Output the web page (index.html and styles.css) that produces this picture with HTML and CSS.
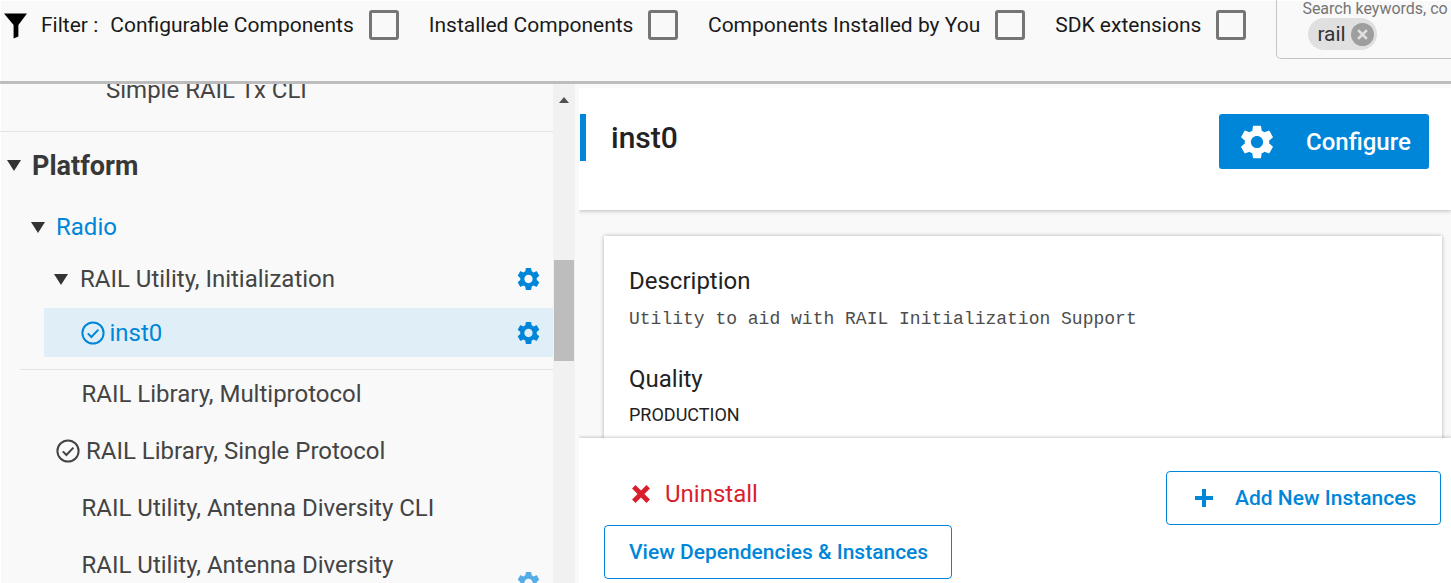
FILE: index.html
```html
<!DOCTYPE html>
<html lang="en">
<head>
  <meta charset="UTF-8" />
  <title>Software Components</title>
  <link rel="stylesheet" href="styles.css">
</head>
<body>
  <svg class="defs" width="0" height="0">
    <symbol id="gear" viewBox="2 2 20 20">
      <path d="M19.14 12.94c.04-.3.06-.61.06-.94 0-.32-.02-.64-.07-.94l2.03-1.58a.49.49 0 0 0 .12-.61l-1.92-3.32a.488.488 0 0 0-.59-.22l-2.39.96c-.5-.38-1.03-.7-1.62-.94l-.36-2.54a.484.484 0 0 0-.48-.41h-3.84c-.24 0-.43.17-.47.41l-.36 2.54c-.59.24-1.13.57-1.62.94l-2.39-.96c-.22-.08-.47 0-.59.22L2.74 8.87c-.12.21-.08.47.12.61l2.03 1.58c-.05.3-.09.63-.09.94s.02.64.07.94l-2.03 1.58a.49.49 0 0 0-.12.61l1.92 3.32c.12.22.37.29.59.22l2.39-.96c.5.38 1.03.7 1.62.94l.36 2.54c.05.24.24.41.48.41h3.84c.24 0 .44-.17.47-.41l.36-2.54c.59-.24 1.13-.56 1.62-.94l2.39.96c.22.08.47 0 .59-.22l1.92-3.32c.12-.22.07-.47-.12-.61l-2.01-1.58zM12 15.6c-1.98 0-3.6-1.62-3.6-3.6s1.62-3.6 3.6-3.6 3.6 1.62 3.6 3.6-1.62 3.6-3.6 3.6z"/>
    </symbol>
    <symbol id="check" viewBox="0 0 24 24">
      <circle cx="12" cy="12" r="10.6" fill="none" stroke="currentColor" stroke-width="2"/>
      <path d="M6.8 12.4l3.6 3.6 7-7.4" fill="none" stroke="currentColor" stroke-width="2"/>
    </symbol>
  </svg>

  <!-- Filter bar -->
  <header class="topbar">
    <svg class="funnel" viewBox="0 0 24 26"><path d="M0 0h24L15 12v12l-5 2V12z"/></svg>
    <span class="filter-label">Filter :</span>
    <label class="filter">Configurable Components <span class="box"></span></label>
    <label class="filter filter-tight">Installed Components <span class="box"></span></label>
    <label class="filter">Components Installed by You <span class="box"></span></label>
    <label class="filter">SDK extensions <span class="box"></span></label>
    <div class="search">
      <div class="search-hint">Search keywords, co</div>
      <span class="chip">rail <span class="chip-x">
        <svg viewBox="0 0 10 10"><path d="M1 1l8 8M9 1L1 9"/></svg>
      </span></span>
    </div>
  </header>

  <main class="main">
    <!-- Component tree -->
    <nav class="tree">
      <div class="tree-list">
        <div class="row row-clipped">Simple RAIL Tx CLI</div>
        <div class="row-platform"><span class="caret"></span>Platform</div>
        <div class="row-radio"><span class="caret"></span>Radio</div>
        <div class="row row-util"><span class="caret"></span>RAIL Utility, Initialization
          <svg class="gear"><use href="#gear"/></svg>
        </div>
        <div class="row row-selected">
          <svg class="check"><use href="#check"/></svg>inst0
          <svg class="gear"><use href="#gear"/></svg>
        </div>
        <div class="row row-plain">RAIL Library, Multiprotocol</div>
        <div class="row row-installed"><svg class="check"><use href="#check"/></svg>RAIL Library, Single Protocol</div>
        <div class="row row-plain">RAIL Utility, Antenna Diversity CLI</div>
        <div class="row row-plain row-last">RAIL Utility, Antenna Diversity
          <svg class="gear gear-faded"><use href="#gear"/></svg>
        </div>
      </div>
    </nav>

    <div class="scrollbar">
      <span class="scroll-up"></span>
      <span class="scroll-thumb"></span>
    </div>

    <!-- Details -->
    <section class="detail">
      <div class="detail-head">
        <h2 class="detail-title">inst0</h2>
        <button class="btn-configure"><svg class="gear-white"><use href="#gear"/></svg>Configure</button>
      </div>
      <div class="detail-body">
        <div class="card">
          <h3>Description</h3>
          <p class="mono">Utility to aid with RAIL Initialization Support</p>
          <h3 class="quality">Quality</h3>
          <p class="plain">PRODUCTION</p>
        </div>
      </div>
      <div class="actions">
        <div class="actions-left">
          <div class="uninstall">
            <svg viewBox="0 0 18 18"><path d="M2.5 2.5l13 13M15.5 2.5l-13 13"/></svg>
            Uninstall
          </div>
          <button class="btn-outline btn-deps">View Dependencies &amp; Instances</button>
        </div>
        <button class="btn-outline btn-add">
          <svg viewBox="0 0 18 18"><path d="M9 0v18M0 9h18"/></svg>
          Add New Instances
        </button>
      </div>
    </section>
  </main>
</body>
</html>
```

FILE: styles.css
```css
* {
  box-sizing: border-box;
}
html, body {
  margin: 0;
  height: 100%;
  overflow: hidden;
}
body {
  font-family: Roboto, Arial, sans-serif;
  background: #f9f9f9;
  color: #333;
}
.defs {
  position: absolute;
}

/* top bar */
.topbar {
  height: 84px;
  display: flex;
  align-items: flex-start;
  padding: 11px 0 0 4px;
  background: #f9f9f9;
  border-bottom: 3px solid #bdbdbd;
  box-shadow: inset 1px 1px #fff;
  overflow: hidden;
  font-size: 21px;
  color: #1a1a1a;
}
.funnel {
  width: 23px;
  height: 26px;
  margin-top: 2px;
  flex: none;
}
.filter-label {
  margin: 2px 12px 0 14px;
  white-space: nowrap;
}
.filter {
  display: flex;
  align-items: flex-start;
  white-space: nowrap;
  margin: 2px 30px 0 0;
}
.filter-tight {
  margin-right: 29.5px;
}
.box {
  width: 30px;
  height: 30px;
  margin: -3px 0 0 15px;
  border: 3px solid #757575;
  border-radius: 3px;
  flex: none;
}
.search {
  width: 300px;
  height: 59px;
  margin: -11px 0 0 0;
  padding: 0 0 0 25px;
  border: 1px solid #c4c4c4;
  border-top: none;
  border-radius: 0 0 0 5px;
  flex: none;
}
.search-hint {
  font-size: 16px;
  color: #757575;
  white-space: nowrap;
  line-height: 17px;
}
.chip {
  display: inline-flex;
  align-items: center;
  height: 32px;
  margin: 1px 0 0 6px;
  padding: 0 3px 0 9px;
  background: #e0e0e0;
  border-radius: 16px;
  font-size: 21px;
  color: #333;
}
.chip-x {
  width: 23px;
  height: 23px;
  margin-left: 5px;
  border-radius: 50%;
  background: #9e9e9e;
  display: flex;
  align-items: center;
  justify-content: center;
}
.chip-x svg {
  width: 11px;
  height: 11px;
  stroke: #e0e0e0;
  stroke-width: 2.4;
}

/* main area */
.main {
  display: flex;
  height: 499px;
}
.tree {
  width: 553px;
  flex: none;
  overflow: hidden;
  box-shadow: inset 1px 0 #fff;
}
.tree-list {
  margin-top: -18px;
}
.row {
  display: flex;
  align-items: center;
  font-size: 24px;
  color: #444;
  white-space: nowrap;
}
.caret {
  width: 0;
  height: 0;
  flex: none;
  border-left: 7px solid transparent;
  border-right: 7px solid transparent;
  border-top: 11px solid #333;
}
.row-clipped {
  height: 66px;
  padding: 0 0 17px 106px;
  border-bottom: 1px solid #e3e3e3;
}
.row-platform {
  display: flex;
  align-items: center;
  height: 66px;
  padding: 1px 0 0 7px;
  font-size: 27px;
  font-weight: 700;
  color: #383838;
}
.row-platform .caret {
  margin-right: 11px;
}
.row-radio {
  display: flex;
  align-items: center;
  height: 58px;
  padding-left: 31px;
  font-size: 24px;
  color: #0086d9;
}
.row-radio .caret {
  margin-right: 11px;
}
.row-util {
  height: 46px;
  margin-bottom: 6px;
  padding-left: 54px;
}
.row-util .caret {
  margin-right: 12px;
}
.gear {
  width: 23px;
  height: 24px;
  margin-left: auto;
  margin-right: 13px;
  fill: #0086d9;
  flex: none;
}
.gear-faded {
  opacity: .65;
}
.row-selected {
  height: 49px;
  margin: 0 0 8px 44px;
  padding-left: 36.5px;
  background: #e0eff7;
  color: #0086d9;
  position: relative;
}
.row-selected::after {
  content: "";
  position: absolute;
  left: -24px;
  right: 0;
  bottom: -13px;
  border-bottom: 1px solid #e3e3e3;
}
.check {
  width: 24px;
  height: 24px;
  margin-right: 6px;
  flex: none;
}
.row-selected .check {
  margin-right: 5px;
}
.row-plain {
  height: 57px;
  padding-left: 81.5px;
}
.row-plain.row-last {
  position: relative;
}
.row-last .gear {
  position: absolute;
  right: 0;
  top: 35px;
}
.row-installed {
  height: 57px;
  padding-left: 56px;
}

/* scrollbar */
.scrollbar {
  width: 22px;
  flex: none;
  background: #f1f1f1;
  border-right: 1px solid #f1f1f1;
  position: relative;
}
.scroll-up {
  position: absolute;
  left: 6px;
  top: 13px;
  border-left: 5px solid transparent;
  border-right: 5px solid transparent;
  border-bottom: 6px solid #505050;
}
.scroll-thumb {
  position: absolute;
  left: 1px;
  right: 0;
  top: 176px;
  height: 101px;
  background: #bdbdbd;
}

/* detail pane */
.detail {
  flex: 1;
  min-width: 0;
  margin: 4px 0 0 4px;
  display: flex;
  flex-direction: column;
  overflow: hidden;
}
.detail-head {
  height: 122px;
  flex: none;
  display: flex;
  align-items: flex-start;
  justify-content: space-between;
  background: #fff;
  box-shadow: 0 1px 4px rgba(0, 0, 0, .25);
  position: relative;
  z-index: 1;
  padding: 26px 22px 0 0;
}
.detail-title {
  margin: 0 0 0 1px;
  height: 47px;
  padding-left: 25px;
  border-left: 6px solid #0086d9;
  font-size: 30px;
  font-weight: 500;
  line-height: 47px;
  color: #222;
}
.btn-configure {
  width: 210px;
  height: 55px;
  display: flex;
  align-items: center;
  padding: 0 0 0 21px;
  border: none;
  border-radius: 3px;
  background: #0086d9;
  color: #fff;
  font: 500 24px Roboto, Arial, sans-serif;
}
.gear-white {
  width: 34px;
  height: 36px;
  margin-right: 32px;
  fill: #fff;
  flex: none;
}
.detail-body {
  height: 228px;
  flex: none;
  padding: 26px 9px 0 25px;
  overflow: hidden;
  background: #f9f9f9;
}
.card {
  height: 220px;
  padding: 30px 25px;
  background: #fff;
  box-shadow: 0 0 4px rgba(0, 0, 0, .3);
}
.card h3 {
  margin: 0;
  font-size: 24px;
  font-weight: 400;
  line-height: 30px;
  color: #222;
}
.mono {
  margin: 13px 0 0;
  font: 18px/20px "Liberation Mono", monospace;
  color: #4d4d4d;
}
.card .quality {
  margin-top: 35px;
}
.plain {
  margin: 11px 0 0;
  font-size: 18px;
  line-height: 20px;
  color: #222;
}

/* footer actions */
.actions {
  flex: 1;
  display: flex;
  justify-content: space-between;
  align-items: flex-start;
  background: #fff;
  box-shadow: 0 -1px 3px rgba(0, 0, 0, .2);
  position: relative;
  padding: 33px 10px 0 25px;
}
.actions-left {
  display: flex;
  flex-direction: column;
  align-items: flex-start;
}
.uninstall {
  display: flex;
  align-items: center;
  height: 46px;
  padding-left: 27px;
  font-size: 24px;
  color: #d91e2e;
}
.uninstall svg {
  width: 20px;
  height: 20px;
  margin-right: 14px;
  stroke: #d91e2e;
  stroke-width: 4.4;
}
.btn-outline {
  height: 54px;
  display: flex;
  align-items: center;
  background: #fff;
  border: 1px solid #0086d9;
  border-radius: 4px;
  color: #0086d9;
  font: 500 21px Roboto, Arial, sans-serif;
  white-space: nowrap;
}
.btn-deps {
  width: 348px;
  margin-top: 8px;
  padding: 0 0 0 24px;
}
.btn-add {
  width: 275px;
  padding: 0 0 0 28px;
}
.btn-add svg {
  width: 18px;
  height: 18px;
  margin-right: 22px;
  stroke: #0086d9;
  stroke-width: 4;
}
```
